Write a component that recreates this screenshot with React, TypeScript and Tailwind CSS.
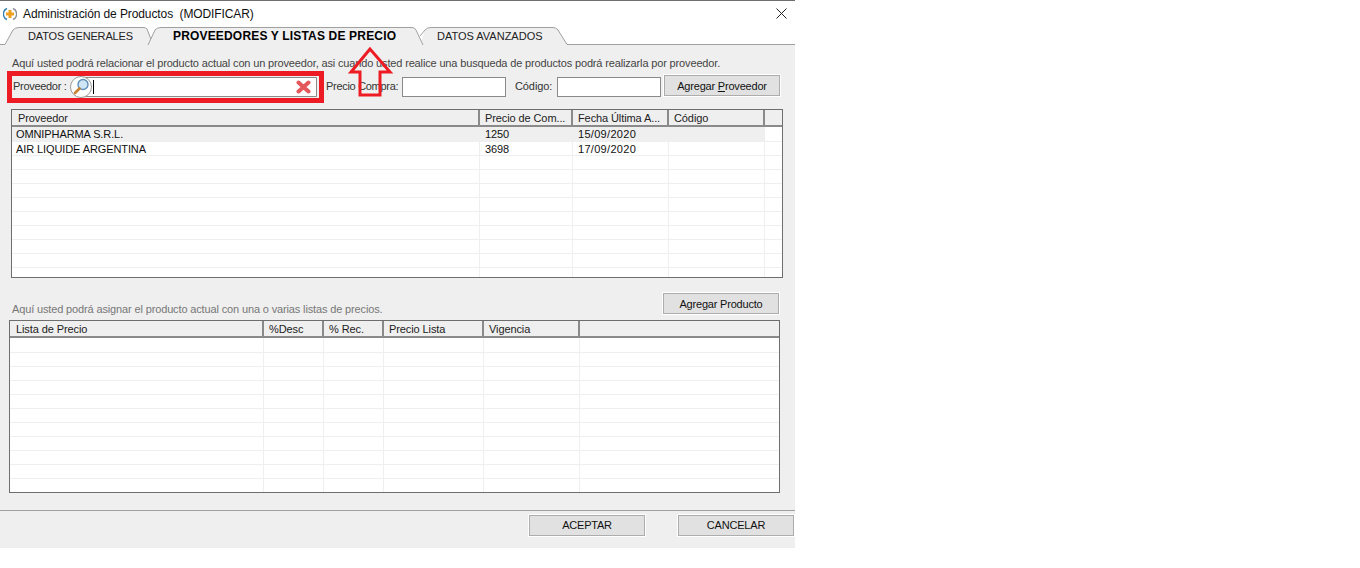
const proveedores = [
  ['OMNIPHARMA S.R.L.', '1250', '15/09/2020'],
  ['AIR LIQUIDE ARGENTINA', '3698', '17/09/2020'],
];

function HeaderCell({ className, text }: { className: string; text?: string }) {
  return (
    <div
      className={`${className} h-[16px] shrink-0 pl-[5px] border-r-2 border-[#8a8a8a] leading-[17px] whitespace-nowrap overflow-hidden`}
    >
      {text}
    </div>
  );
}

function BodyCell({ className, text }: { className: string; text?: string }) {
  return (
    <div
      className={`${className} h-full shrink-0 pl-[5px] border-r border-[#efefef] leading-[15px] whitespace-nowrap overflow-hidden`}
    >
      {text}
    </div>
  );
}

function WinButton({ className, children }: { className: string; children: React.ReactNode }) {
  return (
    <button className={`${className} bg-[#e1e1e1] border border-[#adadad] outline outline-1 outline-white text-[11px] tracking-[-0.2px] text-[#111] flex items-center justify-center`}>
      {children}
    </button>
  );
}

function Tabs() {
  return (
    <div className="relative h-[19px] flex bg-white shrink-0">
      <svg className="absolute inset-0" width="795" height="19">
        <path d="M0 18.5H5L13 4Q15 1.5 19 1.5H143Q146 1.5 147 3L153 19H0Z" fill="#efefef" />
        <path d="M0 18.5H5L13 4Q15 1.5 19 1.5H143Q146 1.5 147 3L153 18.5" fill="none" stroke="#a0a0a0" />
        <path d="M420 19L425 4Q427 1.5 431 1.5H553Q556 1.5 558 4L567 18.5H795V19Z" fill="#efefef" />
        <path d="M420 10L425 4Q427 1.5 431 1.5H553Q556 1.5 558 4L567 18.5H795" fill="none" stroke="#a0a0a0" />
        <path d="M148 19L155 4Q157 1.5 161 1.5H412Q415 1.5 416 4L423 19Z" fill="#efefef" />
        <path d="M148 19L155 4Q157 1.5 161 1.5H412Q415 1.5 416 4L423 19" fill="none" stroke="#a0a0a0" />
      </svg>
      <div className="relative ml-[28px] w-[122px] leading-[20px] text-[11px] tracking-[-0.15px] text-[#222] whitespace-nowrap">DATOS GENERALES</div>
      <div className="relative ml-[23px] w-[264px] leading-[20px] text-[12px] font-bold tracking-[0.17px] text-black whitespace-nowrap">PROVEEDORES Y LISTAS DE PRECIO</div>
      <div className="relative w-[130px] leading-[20px] text-[11px] tracking-[0px] text-[#222] whitespace-nowrap">DATOS AVANZADOS</div>
    </div>
  );
}

function SearchIcon() {
  return (
    <svg width="22" height="22" viewBox="0 0 22 22" className="absolute left-[-2px] top-[-2px]">
      <circle cx="11" cy="11" r="10.5" fill="#fff" stroke="#9a9a9a" />
      <circle cx="13" cy="8.5" r="5" fill="#cfe6f7" stroke="#5f8fb8" strokeWidth="1.4" />
      <path d="M9.5 12.5L5 17" stroke="#c9822f" strokeWidth="2.6" strokeLinecap="round" />
    </svg>
  );
}

export default function App() {
  return (
    <div className="w-[1360px] h-[568px] bg-white font-['Liberation_Sans',sans-serif] text-[#222] relative overflow-hidden">
      <div className="w-[795px] h-[548px] flex flex-col bg-[#efefef] text-[11px] tracking-[-0.1px]">
        {/* barra de titulo */}
        <div className="h-[26px] bg-white border-t border-[#707070] flex items-center shrink-0">
          <svg width="14" height="14" viewBox="0 0 14 14" className="ml-[3px]">
            <path d="M4 1.5A6 6 0 0 0 4 12.5" fill="none" stroke="#2f7fb0" strokeWidth="1.4" />
            <path d="M10 1.5A6 6 0 0 1 10 12.5" fill="none" stroke="#8a8f96" strokeWidth="1.4" />
            <path d="M7 3V11M3 7H11" stroke="#f0a020" strokeWidth="3" />
          </svg>
          <span className="ml-[6px] w-[231px] text-[12px] text-[#111] whitespace-pre tracking-[-0.1px]">Administración de Productos  (MODIFICAR)</span>
          <svg width="11" height="11" viewBox="0 0 11 11" className="ml-[522px]">
            <path d="M0.5 0.5L10.5 10.5M10.5 0.5L0.5 10.5" stroke="#222" />
          </svg>
        </div>
        <Tabs />

        <p className="mt-[11px] ml-[12px] h-[14px] leading-[14px] tracking-[-0.15px] text-[#444] whitespace-nowrap">
          Aquí usted podrá relacionar el producto actual con un proveedor, asi cuando usted realice una busqueda de productos podrá realizarla por proveedor.
        </p>

        {/* fila proveedor */}
        <div className="mt-[5px] h-[23px] flex items-center shrink-0">
          <span className="ml-[13px] w-[58px] text-[#333] tracking-[-0.3px] whitespace-nowrap">Proveedor :</span>
          <div className="relative w-[246px] h-[20px] bg-white border border-[#8a8a8a] rounded-l-[10px] flex items-center">
            <SearchIcon />
            <div className="ml-[21px] w-px h-[14px] bg-black" />
            <svg width="15" height="14" viewBox="0 0 15 14" className="ml-auto mr-[5px]">
              <path d="M2.5 2.5L12.5 11.5M12.5 2.5L2.5 11.5" stroke="#e4585c" strokeWidth="4" strokeLinecap="round" />
            </svg>
          </div>
          <span className="ml-[9px] w-[76px] text-[#333] tracking-[-0.3px] whitespace-nowrap">Precio Compra:</span>
          <div className="w-[104px] h-[20px] bg-white border border-[#8a8a8a]" />
          <span className="ml-[9px] w-[42px] text-[#333] whitespace-nowrap">Código:</span>
          <div className="w-[104px] h-[20px] bg-white border border-[#8a8a8a]" />
          <WinButton className="ml-[3px] w-[116px] h-[21px] pt-px -translate-y-px">
            <span>Agregar <u>P</u>roveedor</span>
          </WinButton>
        </div>

        {/* tabla proveedores */}
        <div className="mt-[11px] ml-[11px] w-[772px] h-[169px] border border-[#6e6e6e] bg-white flex flex-col overflow-hidden shrink-0">
          <div className="flex h-[17px] shrink-0 bg-[#efefef] border-b-2 border-[#8a8a8a]">
            <HeaderCell className="w-[468px] !pl-[6px]" text="Proveedor" />
            <HeaderCell className="w-[93px]" text="Precio de Com..." />
            <HeaderCell className="w-[96px]" text="Fecha Última A..." />
            <HeaderCell className="w-[96px]" text="Código" />
            <div className="flex-1" />
          </div>
          {Array.from({ length: 11 }).map((_, i) => (
            <div key={i} className={`flex shrink-0 border-b border-[#efefef] ${i === 0 ? 'h-[15px] bg-[#efefef]' : 'h-[14px]'}`}>
              <BodyCell className="w-[468px] !pl-[4px] text-[#111]" text={proveedores[i]?.[0]} />
              <BodyCell className="w-[93px] text-[#111]" text={proveedores[i]?.[1]} />
              <BodyCell className="w-[96px] text-[#111] tracking-[0.3px]" text={proveedores[i]?.[2]} />
              <BodyCell className="w-[96px]" />
              <div className="flex-1 bg-white" />
            </div>
          ))}
        </div>

        {/* listas de precio */}
        <div className="mt-[15px] h-[21px] flex items-end shrink-0">
          <p className="ml-[12px] h-[14px] leading-[14px] tracking-[-0.14px] text-[#777] whitespace-nowrap translate-y-[2px]">
            Aquí usted podrá asignar el producto actual con una o varias listas de precios.
          </p>
          <WinButton className="ml-auto mr-[16px] w-[116px] h-[21px] pt-px">Agregar Producto</WinButton>
        </div>

        <div className="mt-[6px] ml-[9px] w-[771px] h-[173px] border border-[#6e6e6e] bg-white flex flex-col overflow-hidden shrink-0">
          <div className="flex h-[17px] shrink-0 bg-[#efefef] border-b-2 border-[#8a8a8a]">
            <HeaderCell className="w-[254px] !pl-[6px]" text="Lista de Precio" />
            <HeaderCell className="w-[60px]" text="%Desc" />
            <HeaderCell className="w-[60px]" text="% Rec." />
            <HeaderCell className="w-[100px]" text="Precio Lista" />
            <HeaderCell className="w-[96px]" text="Vigencia" />
            <div className="flex-1" />
          </div>
          {Array.from({ length: 11 }).map((_, i) => (
            <div key={i} className={`flex shrink-0 border-b border-[#efefef] ${i === 0 ? 'h-[15px]' : 'h-[14px]'}`}>
              <BodyCell className="w-[254px]" />
              <BodyCell className="w-[60px]" />
              <BodyCell className="w-[60px]" />
              <BodyCell className="w-[100px]" />
              <BodyCell className="w-[96px]" />
            </div>
          ))}
        </div>

        {/* botones inferiores */}
        <div className="mt-[17px] border-t border-t-[#a0a0a0] h-[37px] flex items-start pt-[4px] shrink-0">
          <WinButton className="ml-[529px] w-[116px] h-[21px]">ACEPTAR</WinButton>
          <WinButton className="ml-[33px] w-[116px] h-[21px]">CANCELAR</WinButton>
        </div>
      </div>

      {/* anotaciones en rojo sobre la captura */}
      <div className="absolute left-[7px] top-[71px] w-[317px] h-[32px] border-[5px] border-[#ed1c24]" />
      <svg className="absolute left-[345px] top-[45px]" width="50" height="55">
        <path d="M25 4L6 27H15V50H35V27H45Z" fill="none" stroke="#ed1c24" strokeWidth="3" />
      </svg>
    </div>
  );
}
